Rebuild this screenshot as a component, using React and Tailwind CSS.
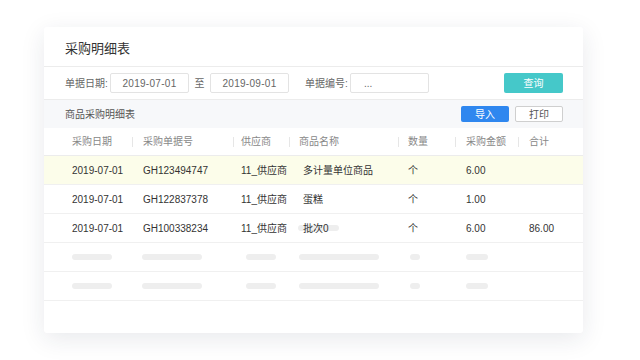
const rows = [
  { date: '2019-07-01', no: 'GH123494747', sup: '11_供应商', name: '多计量单位商品', unit: '个', amt: '6.00', total: '', hl: true },
  { date: '2019-07-01', no: 'GH122837378', sup: '11_供应商', name: '蛋糕', unit: '个', amt: '1.00', total: '' },
  { date: '2019-07-01', no: 'GH100338234', sup: '11_供应商', name: '批次0', unit: '个', amt: '6.00', total: '86.00', bar: true },
]

const cols = ['w-[88px] pl-[28px]', 'w-[101px] pl-[11px]', 'w-[56px] pl-[8px]', 'w-[109px] pl-[10px]', 'w-[57px] pl-[10px]', 'w-[63px] pl-[11px]', 'flex-1 pl-[11px]']
const heads = ['采购日期', '采购单据号', '供应商', '商品名称', '数量', '采购金额', '合计']

const Bar = ({ w, ml }) => <div className={`h-[6px] rounded-full bg-[#eeeeee] ${w} ${ml}`} />

export default function App() {
  return (
    <div className="w-[640px] h-[360px] bg-white pt-[27px] pl-[44px] whitespace-nowrap" style={{ fontFamily: '"Liberation Sans", "Noto Sans CJK SC", sans-serif' }}>
      <div className="w-[539px] h-[306px] bg-white rounded-[3px] shadow-[0_6px_24px_rgba(30,40,70,0.10)] overflow-hidden">
        <div className="h-[40px] flex items-center pt-[5px] pl-[21px] text-[13px] text-[#333] border-b border-[#ececec]">采购明细表</div>

        <div className="h-[33px] flex items-center pl-[21px] text-[10px] text-[#666] border-b border-[#ececec]">
          <span className="w-[45px]">单据日期:</span>
          <div className="w-[79px] h-[20px] border border-[#e3e3e3] rounded-[2px] flex items-center justify-center tracking-[0.3px]">2019-07-01</div>
          <span className="w-[21px] text-center">至</span>
          <div className="w-[79px] h-[20px] border border-[#e3e3e3] rounded-[2px] flex items-center justify-center tracking-[0.3px]">2019-09-01</div>
          <span className="ml-[16px] w-[45px]">单据编号:</span>
          <div className="w-[79px] h-[20px] border border-[#e3e3e3] rounded-[2px] flex items-center pl-[13px]">...</div>
          <div className="ml-[75px] w-[59px] h-[20px] rounded-[2px] bg-[#45c8c9] text-white flex items-center justify-center">查询</div>
        </div>

        <div className="h-[28px] bg-[#f7f8fa] flex items-center pl-[21px] pr-[20px] text-[10px] text-[#555]">
          <span>商品采购明细表</span>
          <div className="ml-auto w-[48px] h-[16px] rounded-[2px] bg-[#2f87ef] text-white flex items-center justify-center">导入</div>
          <div className="ml-[6px] w-[48px] h-[16px] rounded-[2px] border border-[#cfcfcf] bg-white text-[#555] flex items-center justify-center">打印</div>
        </div>

        <div className="h-[28px] flex items-center text-[10px] text-[#888] border-b border-[#ececec]">
          {heads.map((h, i) => (
            <div key={h} className={`${cols[i]} relative h-full flex items-center`}>
              {i > 0 && <div className="absolute left-0 top-[9px] h-[10px] w-px bg-[#e6e6e6]" />}
              {h}
            </div>
          ))}
        </div>

        {rows.map((r, idx) => {
          const vals = [r.date, r.no, r.sup, r.name, r.unit, r.amt, r.total]
          return (
            <div key={idx} className={`h-[29px] flex items-center text-[10px] text-[#333] border-b border-[#f0f0f0] ${r.hl ? 'bg-[#fcfdea]' : ''}`}>
              {vals.map((v, i) => (
                <div key={i} className={`${cols[i]} ${i === 3 ? 'pl-[14px]' : ''} relative`}>
                  {i === 3 && r.bar && <div className="absolute left-[9px] top-[4px] w-[41px] h-[6px] rounded-full bg-[#eeeeee]" />}
                  <span className="relative">{v}</span>
                </div>
              ))}
            </div>
          )
        })}

        {[0, 1].map(k => (
          <div key={k} className="h-[29px] flex items-center border-b border-[#f0f0f0]">
            <Bar w="w-[40px]" ml="ml-[28px]" />
            <Bar w="w-[60px]" ml="ml-[30px]" />
            <Bar w="w-[30px]" ml="ml-[44px]" />
            <Bar w="w-[80px]" ml="ml-[23px]" />
            <Bar w="w-[10px]" ml="ml-[31px]" />
            <Bar w="w-[22px]" ml="ml-[46px]" />
          </div>
        ))}
      </div>
    </div>
  )
}
